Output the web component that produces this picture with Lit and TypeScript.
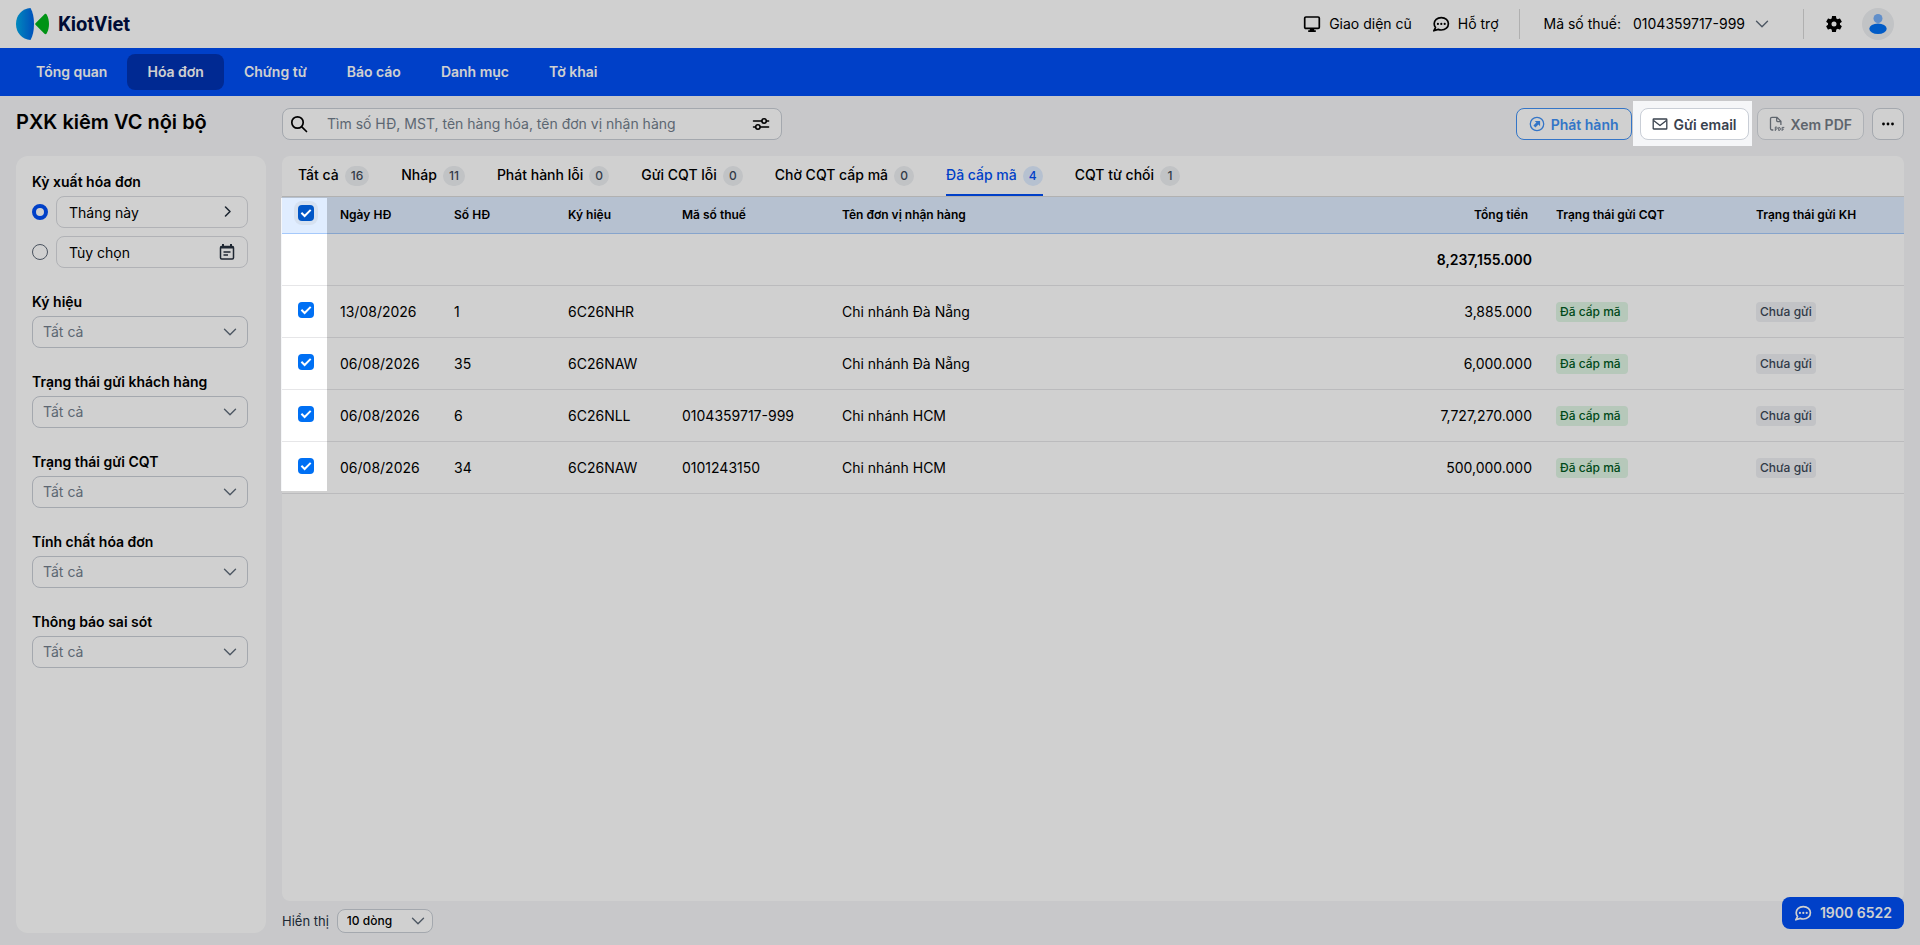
import { LitElement, html, css, svg, nothing } from "lit";
import { customElement, state } from "lit/decorators.js";
import { classMap } from "lit/directives/class-map.js";

interface Invoice {
  date: string;
  no: string;
  symbol: string;
  tax: string;
  name: string;
  total: string;
}

const NAV = ["Tổng quan", "Hóa đơn", "Chứng từ", "Báo cáo", "Danh mục", "Tờ khai"];

const TABS: [string, number][] = [
  ["Tất cả", 16],
  ["Nháp", 11],
  ["Phát hành lỗi", 0],
  ["Gửi CQT lỗi", 0],
  ["Chờ CQT cấp mã", 0],
  ["Đã cấp mã", 4],
  ["CQT từ chối", 1],
];

const FILTERS = [
  "Ký hiệu",
  "Trạng thái gửi khách hàng",
  "Trạng thái gửi CQT",
  "Tính chất hóa đơn",
  "Thông báo sai sót",
];

const INVOICES: Invoice[] = [
  { date: "13/08/2026", no: "1", symbol: "6C26NHR", tax: "", name: "Chi nhánh Đà Nẵng", total: "3,885.000" },
  { date: "06/08/2026", no: "35", symbol: "6C26NAW", tax: "", name: "Chi nhánh Đà Nẵng", total: "6,000.000" },
  { date: "06/08/2026", no: "6", symbol: "6C26NLL", tax: "0104359717-999", name: "Chi nhánh HCM", total: "7,727,270.000" },
  { date: "06/08/2026", no: "34", symbol: "6C26NAW", tax: "0101243150", name: "Chi nhánh HCM", total: "500,000.000" },
];

const icon = (size: number, body: unknown) =>
  html`<svg class="icon" width=${size} height=${size} viewBox="0 0 ${size} ${size}" fill="none" stroke="currentColor" aria-hidden="true">${body}</svg>`;

const chevronDown = html`<svg class="chevron" width="14" height="8" viewBox="0 0 14 8" fill="none" stroke="currentColor" stroke-width="1.4" stroke-linecap="round" stroke-linejoin="round" aria-hidden="true"><path d="M1.5 1.2 7 6.7l5.5-5.5" /></svg>`;

const chat = icon(
  18,
  svg`<path stroke-width="1.7" stroke-linejoin="round" d="M9.3 2.6c4.2 0 7.1 2.7 7.1 6.2s-2.9 6.2-7.1 6.2c-1.1 0-2.1-.2-3-.6L1.8 15.8l1.7-3.2C2.7 11.5 2.2 10.2 2.2 8.8c0-3.5 2.9-6.2 7.1-6.2Z"/><g fill="currentColor" stroke="none"><circle cx="5.9" cy="8.9" r="1.1"/><circle cx="9.3" cy="8.9" r="1.1"/><circle cx="12.7" cy="8.9" r="1.1"/></g>`,
);

const monitor = icon(
  18,
  svg`<rect x="1.7" y="2" width="14.6" height="11.4" rx="1.2" stroke-width="1.7"/><path stroke="none" fill="currentColor" d="M6.800 13.500h4.400v1.700h1.600V17H5.200v-1.800h1.600Z"/>`,
);

const gear = html`<svg class="icon" width="20" height="20" viewBox="0 0 24 24" fill="currentColor" aria-hidden="true"><path d="M19.140 12.940c.040-.300.060-.610.060-.940 0-.320-.020-.640-.070-.940l2.030-1.580a.490.490 0 0 0 .120-.610l-1.920-3.320a.488.488 0 0 0-.590-.220l-2.390.960c-.500-.380-1.030-.700-1.620-.940l-.360-2.540a.484.484 0 0 0-.480-.410h-3.840c-.240 0-.430.170-.470.410l-.360 2.540c-.590.240-1.130.570-1.620.940l-2.390-.960c-.220-.080-.470 0-.590.220L2.740 8.870c-.120.210-.080.470.120.610l2.030 1.580c-.050.300-.090.630-.090.940s.020.640.070.940l-2.030 1.580a.490.490 0 0 0-.120.610l1.920 3.320c.120.220.370.290.590.220l2.390-.960c.500.380 1.030.700 1.620.940l.360 2.540c.050.240.240.410.480.410h3.840c.240 0 .440-.170.470-.410l.360-2.540c.590-.240 1.130-.560 1.620-.940l2.390.960c.220.080.470 0 .590-.220l1.920-3.320c.120-.220.070-.470-.120-.610l-2.010-1.580ZM12 15a3 3 0 1 1 0-6 3 3 0 0 1 0 6Z"/></svg>`;

const publish = icon(
  16,
  svg`<circle cx="8" cy="8" r="6.700" stroke-width="1.300"/><path stroke="none" fill="currentColor" d="M5.700 4.900h5.400v5.400l-1.700-1.700-3 3-2-2 3-3Z"/>`,
);

const mail = icon(
  16,
  svg`<rect x="1.200" y="3" width="13.600" height="10" rx=".6" stroke-width="1.300"/><path stroke-width="1.300" stroke-linejoin="round" d="m1.600 4.600 6.400 5 6.400-5"/>`,
);

const pdf = html`<svg class="icon" width="16" height="16" viewBox="0 0 16 16" fill="none" stroke="currentColor" stroke-width="1.3" aria-hidden="true"><path d="M4.300 14H2.900a1.400 1.400 0 0 1-1.400-1.400V2.700a1.400 1.400 0 0 1 1.400-1.400H8l3.900 3.900V9M7.700 1.600v3.200c0 .5.300.8.800.8h3.200"/><path stroke-width="1" d="M6.300 15v-4h1c1.400 0 1.400 2.200 0 2.200h-1M9.700 11.400v3.100h.5c1.600 0 1.600-3.100 0-3.100ZM13.100 15v-3.600h2.200M13.100 13.200h1.800"/></svg>`;

@customElement("app-root")
export class AppRoot extends LitElement {
  @state() private activeTab = 5;

  static styles = css`
    :host {
      display: flex;
      flex-direction: column;
      position: relative;
      box-sizing: border-box;
      min-height: 100vh;
      background: #f5f6f8;
      color: #000;
      font: 400 14px/20px Inter, sans-serif;
      --line: #c9ced6;
      --blue: #004ff5;
    }
    *, *::before, *::after { box-sizing: border-box; }
    a { color: inherit; text-decoration: none; }
    button, input, select { font: inherit; color: inherit; margin: 0; }
    button { cursor: pointer; }
    .icon, .chevron { display: block; flex: none; }
    .chevron { color: #5f6b7a; pointer-events: none; }

    .top {
      display: flex;
      align-items: center;
      height: 48px;
      padding: 0 26px 0 16px;
      background: #fff;
    }
    .brand { display: flex; align-items: center; gap: 9px; margin-right: auto; color: #000f42; font: 700 20px/24px Roboto, sans-serif; }
    .link { display: flex; align-items: center; gap: 8px; margin-right: 20px; }
    .rule { width: 1px; height: 30px; background: #d8d8d8; }
    .account { display: flex; align-items: center; gap: 12px; margin: 0 34px 0 24px; padding: 0; border: 0; background: none; }
    .account .chevron { margin-left: -2px; }
    .round { display: block; padding: 0; border: 0; background: none; }
    .settings { margin: 0 18px 0 20px; }

    .nav { display: flex; align-items: center; height: 48px; padding: 0 16px; background: var(--blue); color: #fff; font-weight: 600; }
    .nav a { padding: 8px 20px; border-radius: 8px; }
    .nav a.on { background: #0033b4; }

    .body { flex: 1; display: grid; grid-template-columns: 250px minmax(0, 1fr); grid-template-rows: auto 1fr; gap: 16px; padding: 12px 16px; }
    h1 { margin: 0; font: 600 20px/28px Inter, sans-serif; }

    .bar { display: flex; align-items: center; gap: 8px; }
    .search { display: flex; align-items: center; flex: 0 1 500px; margin-right: auto; height: 32px; padding: 0 11px 0 7px; gap: 19px; border: 1px solid var(--line); border-radius: 8px; background: #fff; }
    .search input { flex: 1; min-width: 0; padding: 0; border: 0; outline: 0; background: none; }
    .search input::placeholder { color: #727e8c; opacity: 1; }
    .btn { display: flex; align-items: center; justify-content: center; gap: 6px; height: 32px; padding: 0 11px; border: 1px solid var(--line); border-radius: 8px; background: #fff; color: #39424e; font-weight: 600; }
    .btn.primary { padding: 0 12px; border-color: #4090f4; color: #4090f4; }
    .btn.off { color: #757c86; border-color: #d6dae0; }
    .btn.more { width: 32px; padding: 0; color: #000; }
    .btn span, .period span { padding-top: 2px; }

    .side { display: flex; flex-direction: column; gap: 24px; padding: 16px 18px 16px 16px; border-radius: 12px; background: #fff; }
    .group { display: flex; flex-direction: column; gap: 4px; }
    .group > label, .caption { font-weight: 600; }
    .period { display: flex; align-items: center; gap: 8px; }
    .period + .period { margin-top: 4px; }
    .period button { flex: 1; display: flex; align-items: center; justify-content: space-between; height: 32px; padding: 0 12px; border: 1px solid #d9dbdf; border-radius: 8px; background: #fff; }
    .period .icon { color: #27313f; }
    input[type="radio"] { appearance: none; flex: none; width: 16px; height: 16px; border: 1px solid #5b6675; border-radius: 50%; background: #fff; }
    input[type="radio"]:checked { border: 4px solid var(--blue); }

    .pick { display: grid; align-items: center; }
    .pick > * { grid-area: 1 / 1; }
    .pick .chevron { justify-self: end; margin-right: 11px; }
    .pick select { appearance: none; width: 100%; height: 32px; padding: 0 32px 0 10px; border: 1px solid var(--line); border-radius: 8px; background: #fff; color: #727e8c; outline: 0; }

    .main { display: flex; flex-direction: column; min-width: 0; }
    .sheet { flex: 1; border-radius: 8px; overflow: hidden; background: #fff; }
    .tabs { display: flex; gap: 32px; height: 41px; padding: 0 16px; border-bottom: 1px solid #d9d9d9; }
    .tab { display: flex; align-items: center; gap: 6px; padding: 0 0 2px; border: 0; background: none; white-space: nowrap; font-weight: 500; }
    .tab.on { color: var(--blue); box-shadow: inset 0 -2px var(--blue); }
    .count { min-width: 20px; margin-top: 2px; padding: 0 6px; border-radius: 10px; background: #edeff2; color: #3f4a58; font-size: 12px; text-align: center; }
    .tab.on .count { background: #e0edff; color: var(--blue); }

    table { width: 100%; table-layout: fixed; border-spacing: 0; }
    th, td { padding: 0 12px; text-align: left; white-space: nowrap; }
    th { height: 37px; border-bottom: 1px solid #a5c9fb; background: #e0edff; font-size: 12px; font-weight: 600; line-height: 16px; }
    td { height: 52px; border-bottom: 1px solid #e6e6e8; }
    th.num { padding-right: 16px; }
    .num { text-align: right; }
    .check { padding: 0 16px 4px; }
    .c-check { width: 46px; }
    .c-short { width: 114px; }
    .c-mid { width: 160px; }
    .c-wide { width: 200px; }
    .sum td { font-weight: 600; }
    input[type="checkbox"] {
      appearance: none;
      display: block;
      width: 16px;
      height: 16px;
      border: 1px solid #8b96a5;
      border-radius: 4px;
      background: #fff;
    }
    input[type="checkbox"]:checked {
      border: 0;
      background: #0070f4 url("data:image/svg+xml,%3Csvg xmlns='http://www.w3.org/2000/svg' viewBox='0 0 16 16' fill='none' stroke='%23fff' stroke-width='2'%3E%3Cpath d='M3.4 7.8 6.6 11 12.7 4.9'/%3E%3C/svg%3E") center / 16px 16px;
    }
    th input[type="checkbox"]:checked { background-color: #0056c7; box-shadow: 0 0 0 4px #d6e1f0; }
    .tag { display: inline-block; padding: 0 4px; border-radius: 4px; background: #eef0f3; color: #3c4858; font-size: 12px; font-weight: 500; vertical-align: middle; }
    .tag.ok { padding-right: 7px; background: #dff5e4; color: #005a22; }

    .foot { display: flex; align-items: center; gap: 8px; padding-top: 8px; font-size: 13px; color: #27313f; }
    .foot select { width: 96px; height: 24px; padding: 0 24px 0 9px; color: #000; font-size: 12px; font-weight: 500; }
    .foot .pick .chevron { margin-right: 8px; }

    .hotline { position: absolute; right: 16px; bottom: 16px; display: flex; align-items: center; gap: 8px; height: 32px; padding: 0 12px; border-radius: 8px; background: var(--blue); color: #fff; font-weight: 600; }

    /* Dimmed tour layer; the mask leaves the tick column and the e-mail button lit. */
    .tour {
      position: absolute;
      inset: 0;
      pointer-events: none;
      background: rgba(0, 0, 0, 0.184);
      mask:
        linear-gradient(#000, #000) left 281px top 198px / 46px 293px no-repeat,
        linear-gradient(#000, #000) right 168px top 101px / 119px 45px no-repeat,
        linear-gradient(#000, #000);
      mask-composite: exclude;
    }
  `;

  private header() {
    return html`
      <header class="top">
        <a class="brand" href="#">
          <svg width="33" height="32" viewBox="0 0 33 32" aria-hidden="true">
            <defs>
              <linearGradient id="wing" x1="0" x2="1"><stop offset="0" stop-color="#00a8e8" /><stop offset="1" stop-color="#0062e6" /></linearGradient>
            </defs>
            <path fill="url(#wing)" d="M14.500 0C16.800 4 18 9.500 18 16s-1.200 12-3.500 16C6 31.500 0 24.800 0 16S6 .5 14.500 0Z" />
            <path fill="#00b51a" d="M19.500 15.200 28.500 6.200c.9-.7 1.700-.4 2.300.5C32.200 9.200 33 12.500 33 16s-.8 6.800-2.200 9.300c-.6.9-1.400 1.200-2.300.5l-9-9c-.5-.5-.5-1.100 0-1.600Z" />
          </svg>
          KiotViet
        </a>
        <a class="link" href="#">${monitor}Giao diện cũ</a>
        <a class="link" href="#">${chat}Hỗ trợ</a>
        <span class="rule"></span>
        <button class="account" type="button"><span>Mã số thuế:</span><span>0104359717-999</span>${chevronDown}</button>
        <span class="rule"></span>
        <button class="round settings" type="button" aria-label="Thiết lập">${gear}</button>
        <button class="round" type="button" aria-label="Tài khoản">
          <svg class="icon" width="32" height="32" viewBox="0 0 32 32" aria-hidden="true">
            <circle cx="16" cy="16" r="16" fill="#edeff2" />
            <circle cx="16" cy="10.500" r="4.500" fill="#77b0f8" />
            <ellipse cx="16" cy="20.800" rx="8.700" ry="5.200" fill="#0070f4" />
          </svg>
        </button>
      </header>
      <nav class="nav">
        ${NAV.map((n, i) => html`<a href="#" class=${classMap({ on: i === 1 })}>${n}</a>`)}
      </nav>
    `;
  }

  private toolbar() {
    return html`
      <div class="bar">
        <div class="search">
          ${icon(18, svg`<circle cx="7.500" cy="7.500" r="5.700" stroke-width="1.700"/><path stroke-width="1.700" stroke-linecap="round" d="m11.800 11.800 4.700 4.700"/>`)}
          <input type="text" aria-label="Tìm kiếm" placeholder="Tìm số HĐ, MST, tên hàng hóa, tên đơn vị nhận hàng" />
          ${icon(18, svg`<g stroke-width="1.500" stroke-linecap="round"><path d="M1.500 6h8.200M14.600 6h2M1.500 12h2M8.400 12h8.200"/><circle cx="12.100" cy="6" r="2.200"/><circle cx="5.900" cy="12" r="2.200"/></g>`)}
        </div>
        <button class="btn primary" type="button">${publish}<span>Phát hành</span></button>
        <button class="btn" type="button">${mail}<span>Gửi email</span></button>
        <button class="btn off" type="button">${pdf}<span>Xem PDF</span></button>
        <button class="btn more" type="button" aria-label="Thêm">
          ${icon(16, svg`<g fill="currentColor" stroke="none"><circle cx="3.500" cy="8" r="1.400"/><circle cx="8" cy="8" r="1.400"/><circle cx="12.500" cy="8" r="1.400"/></g>`)}
        </button>
      </div>
    `;
  }

  private sidebar() {
    return html`
      <aside class="side">
        <div class="group" role="radiogroup" aria-labelledby="period">
          <span class="caption" id="period">Kỳ xuất hóa đơn</span>
          <div class="period">
            <input type="radio" name="period" aria-label="Tháng này" checked />
            <button type="button"><span>Tháng này</span>${icon(16, svg`<path stroke-width="1.600" stroke-linecap="round" stroke-linejoin="round" d="m6.500 3 4.500 4.500L6.500 12"/>`)}</button>
          </div>
          <div class="period">
            <input type="radio" name="period" aria-label="Tùy chọn" />
            <button type="button"><span>Tùy chọn</span>${icon(16, svg`<rect x="1.500" y="2.500" width="13" height="12.500" rx="1.200" stroke-width="1.500"/><path stroke-width="2" d="M1.500 3.500h13M4 0v3M12 0v3"/><path stroke-width="1.500" d="M4.500 8h7M4.500 11h4.500"/>`)}</button>
          </div>
        </div>
        ${FILTERS.map(
          (f, i) => html`
            <div class="group">
              <label for="filter-${i}">${f}</label>
              <div class="pick"><select id="filter-${i}"><option>Tất cả</option></select>${chevronDown}</div>
            </div>
          `,
        )}
      </aside>
    `;
  }

  private table() {
    return html`
      <table>
        <colgroup>
          <col class="c-check" /><col class="c-short" /><col class="c-short" /><col class="c-short" /><col class="c-mid" />
          <col /><col class="c-mid" /><col class="c-wide" /><col class="c-mid" />
        </colgroup>
        <thead>
          <tr>
            <th class="check"><input type="checkbox" aria-label="Chọn tất cả" checked /></th>
            <th>Ngày HĐ</th>
            <th>Số HĐ</th>
            <th>Ký hiệu</th>
            <th>Mã số thuế</th>
            <th>Tên đơn vị nhận hàng</th>
            <th class="num">Tổng tiền</th>
            <th>Trạng thái gửi CQT</th>
            <th>Trạng thái gửi KH</th>
          </tr>
        </thead>
        <tbody>
          <tr class="sum">
            <td colspan="6"></td>
            <td class="num">8,237,155.000</td>
            <td></td>
            <td></td>
          </tr>
          ${INVOICES.map(
            (r) => html`
              <tr>
                <td class="check"><input type="checkbox" aria-label="Chọn hóa đơn ${r.no}" checked /></td>
                <td>${r.date}</td>
                <td>${r.no}</td>
                <td>${r.symbol}</td>
                <td>${r.tax || nothing}</td>
                <td>${r.name}</td>
                <td class="num">${r.total}</td>
                <td><span class="tag ok">Đã cấp mã</span></td>
                <td><span class="tag">Chưa gửi</span></td>
              </tr>
            `,
          )}
        </tbody>
      </table>
    `;
  }

  render() {
    return html`
      ${this.header()}
      <div class="body">
        <h1>PXK kiêm VC nội bộ</h1>
        ${this.toolbar()} ${this.sidebar()}
        <main class="main">
          <section class="sheet">
            <div class="tabs" role="tablist">
              ${TABS.map(
                ([name, count], i) => html`
                  <button
                    type="button"
                    role="tab"
                    aria-selected=${i === this.activeTab ? "true" : "false"}
                    class=${classMap({ tab: true, on: i === this.activeTab })}
                    @click=${() => (this.activeTab = i)}
                  >${name}<span class="count">${count}</span></button>
                `,
              )}
            </div>
            ${this.table()}
          </section>
          <div class="foot">
            <label for="page-size">Hiển thị</label>
            <div class="pick"><select id="page-size"><option>10 dòng</option></select>${chevronDown}</div>
          </div>
        </main>
      </div>
      <a class="hotline" href="tel:19006522">${chat}1900 6522</a>
      <div class="tour"></div>
    `;
  }
}
